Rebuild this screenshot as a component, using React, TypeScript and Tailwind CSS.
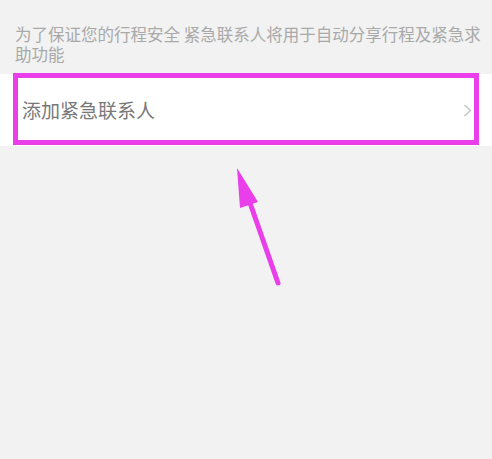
const ChevronRight = () => (
  <svg width="9" height="13" viewBox="0 0 9 13" fill="none" className="shrink-0">
    <path d="M1.5 1 L7.5 6.5 L1.5 12" stroke="#c4c4c4" strokeWidth="1.4" />
  </svg>
);

const App = () => {
  return (
    <div
      className="relative w-full h-[459px] overflow-hidden bg-[#f2f2f2]"
      style={{ fontFamily: '"Noto Sans CJK SC", "Noto Sans", sans-serif' }}
    >
      <p className="pl-[15px] pr-[8px] pt-[24px] text-[16.5px] leading-[20px] text-[#a9a9a9]">
        为了保证您的行程安全 紧急联系人将用于自动分享行程及紧急求助功能
      </p>

      <div className="relative mt-[10px] h-[72px] bg-white flex items-center justify-between pl-[22px] pr-[20px]">
        <span className="text-[19px] text-[#787878]">添加紧急联系人</span>
        <ChevronRight />
        {/* annotation frame */}
        <div className="absolute left-[13px] right-[13px] top-[-1px] bottom-[1px] border-[5px] border-[#e93ee9] pointer-events-none" />
      </div>

      {/* annotation arrow */}
      <svg className="absolute left-0 top-0 pointer-events-none" width="492" height="459" viewBox="0 0 492 459">
        <line x1="278" y1="283" x2="249" y2="200" stroke="#e93ee9" strokeWidth="5" strokeLinecap="round" />
        <polygon points="237,168 240,208 258,202" fill="#e93ee9" />
      </svg>
    </div>
  );
};

export default App;
